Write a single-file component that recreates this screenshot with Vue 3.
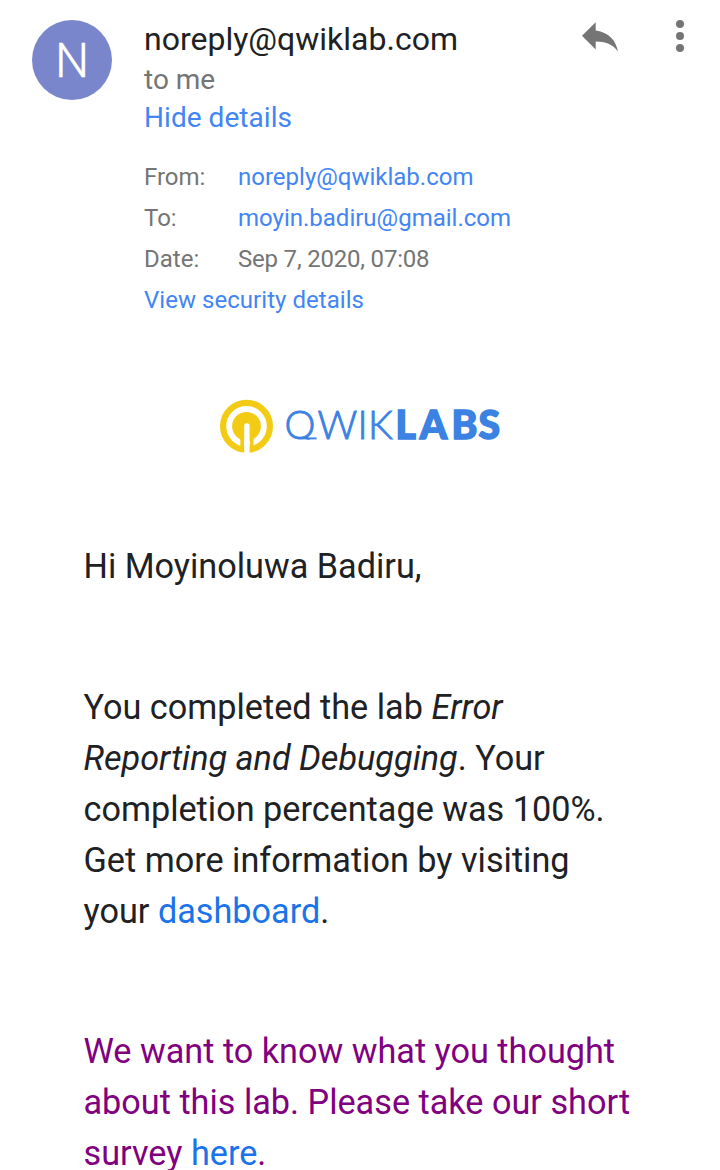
<script setup>
const details = [
  { label: 'From:', value: 'noreply@qwiklab.com', link: true },
  { label: 'To:', value: 'moyin.badiru@gmail.com', link: true },
  { label: 'Date:', value: 'Sep 7, 2020, 07:08', link: false, narrow: true },
]
</script>

<template>
  <main class="mail">
    <header class="head">
      <div class="avatar">N</div>
      <div class="meta">
        <div class="sender">noreply@qwiklab.com</div>
        <div class="to">to me</div>
        <a class="toggle">Hide details</a>
        <dl class="details">
          <div v-for="d in details" :key="d.label" class="row">
            <dt>{{ d.label }}</dt>
            <dd :class="{ link: d.link, narrow: d.narrow }">{{ d.value }}</dd>
          </div>
        </dl>
        <a class="security">View security details</a>
      </div>
      <div class="actions">
        <svg class="reply" width="36" height="30" viewBox="0 0 36 30"><path d="M13.700 8.500V0.300L0 13.800l13.700 13.700V19.500c10 0 17 2.700 22.300 10-2-10.300-8.300-19-22.300-21z" fill="#757575" /></svg>
        <svg class="more" width="8" height="32" viewBox="0 0 8 32" fill="#757575"><circle cx="4" cy="4" r="4" /><circle cx="4" cy="16" r="4" /><circle cx="4" cy="28" r="4" /></svg>
      </div>
    </header>
    <div class="brand">
      <svg width="284" height="56" viewBox="0 0 284 56">
        <defs><clipPath id="bowl"><rect x="60" y="5" width="40" height="36.400" /></clipPath></defs>
        <circle cx="27.500" cy="28.300" r="23.400" fill="none" stroke="#f3cb15" stroke-width="6.200" />
        <circle cx="27.500" cy="28.300" r="14.400" fill="#f3cb15" />
        <path d="M23.200 39V51M32.600 39V51" stroke="#f3cb15" stroke-width="3.800" />
        <path d="M27.900 28V58" stroke="#fff" stroke-width="5.400" stroke-linecap="round" />
        <text x="65.500" y="41" class="word" clip-path="url(#bowl)">Q</text>
        <path d="M79 40.400H97.600" stroke="#3b82e2" stroke-width="1.900" />
        <text x="98.600 138.500 149" y="41" class="word">WIK</text>
        <text x="176.500 200.700 232.500 259.500" y="41" class="word bold">LABS</text>
      </svg>
    </div>
    <article class="body">
      <p>Hi Moyinoluwa Badiru,</p>
      <p>You completed the lab <em>Error<br />Reporting and Debugging</em>. Your<br />completion percentage was 100%.<br />Get more information by visiting<br />your <a>dashboard</a>.</p>
      <p class="survey">We want to know what you thought<br />about this lab. Please take our short<br />survey <a>here</a>.</p>
    </article>
  </main>
</template>

<style>
body { background: #fff; }
</style>
<style scoped>
.mail { width: 720px; height: 1170px; overflow: hidden; font-family: Roboto, sans-serif; color: #202124; }
.head { display: flex; height: 320px; padding: 20px 36px 0 32px; box-sizing: border-box; }
.avatar { width: 80px; height: 80px; border-radius: 50%; background: #7986cb; color: #fff; font-size: 48px; line-height: 82px; text-align: center; font-weight: 300; flex: none; -webkit-text-stroke: 0.4px #fff; }
.meta { margin-left: 32px; flex: 1; }
.sender { font-size: 32px; line-height: 38px; white-space: nowrap; }
.to { font-size: 28px; line-height: 40px; padding-top: 2px; color: #757575; }
.toggle { display: block; font-size: 28px; line-height: 36px; color: #4285f4; letter-spacing: 0.05px; }
.details { margin: 21px 0 0; font-size: 24px; line-height: 41px; color: #757575; }
.row { display: flex; }
dt { width: 94px; }
dd { margin: 0; white-space: nowrap; }
.narrow { letter-spacing: -0.2px; }
.link, .security { color: #4285f4; }
.security { display: block; font-size: 24px; line-height: 41px; letter-spacing: 0.04px; }
.actions { display: flex; gap: 58px; align-items: flex-start; }
.reply { margin-top: 2px; }
.brand { margin: 78px 0 0 219px; height: 56px; }
.brand svg { display: block; }
.word { font-family: Lato, sans-serif; font-size: 39px; font-weight: 300; fill: #3b82e2; stroke: #3b82e2; stroke-width: 0.900px; }
.bold { font-weight: 900; stroke-width: 1.500px; }
.body { padding: 87px 0 0 83.500px; font-size: 34.230px; line-height: 51px; white-space: nowrap; }
.body p { margin: 0 0 90px; }
.body a { color: #1a73e8; }
.body .survey { color: #800080; margin-top: -1px; }
</style>
